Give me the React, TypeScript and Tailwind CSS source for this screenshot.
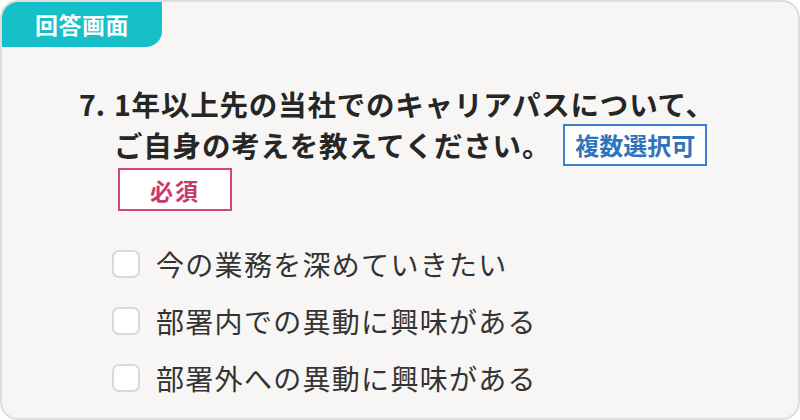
import React from "react";

const font = { fontFamily: '"Noto Sans CJK JP", "Noto Sans", sans-serif' };

function Checkbox() {
  return <div className="w-[28px] h-[28px] shrink-0 rounded-[7px] border-2 border-[#d9d9d9] bg-white" />;
}

export default function App() {
  const options = ["今の業務を深めていきたい", "部署内での異動に興味がある", "部署外への異動に興味がある"];
  return (
    <div className="w-[800px] h-[420px] bg-white" style={font}>
      <div className="relative w-full h-full rounded-[18px] border-2 border-[#dfdedc] bg-[#f7f6f4] overflow-hidden">
        <div className="absolute top-0 left-0 w-[160px] h-[45px] bg-[#17bfc9] rounded-br-[16px] flex items-center justify-center text-white font-bold text-[23px] tracking-[0.5px]">
          回答画面
        </div>
        <div className="pt-[82px] pl-[77px]">
          <div className="flex text-[#262626] font-bold text-[28.5px] leading-[40px] tracking-[0.8px]">
            <div className="w-[35px] shrink-0 tracking-normal">7.</div>
            <div className="flex flex-col">
              <div>1年以上先の当社でのキャリアパスについて、</div>
              <div className="flex items-center">
                <span>ご自身の考えを教えてください。</span>
                <span className="ml-[12px] h-[42px] px-[10px] flex items-center border-2 border-[#3c82c8] bg-white text-[#2f74bb] text-[24px] tracking-normal">
                  複数選択可
                </span>
              </div>
              <div className="mt-[2px] ml-[4px] w-[114px] h-[43px] flex items-center justify-center border-2 border-[#d2467a] bg-white text-[#c83a6c] text-[23px] tracking-[2px]">
                必須
              </div>
            </div>
          </div>
          <div className="mt-[24px] ml-[33px] flex flex-col">
            {options.map((o) => (
              <div key={o} className="h-[57px] flex items-center gap-[16px]">
                <Checkbox />
                <span className="text-[28px] text-[#333333] tracking-[1.3px] font-normal">{o}</span>
              </div>
            ))}
          </div>
        </div>
      </div>
    </div>
  );
}
